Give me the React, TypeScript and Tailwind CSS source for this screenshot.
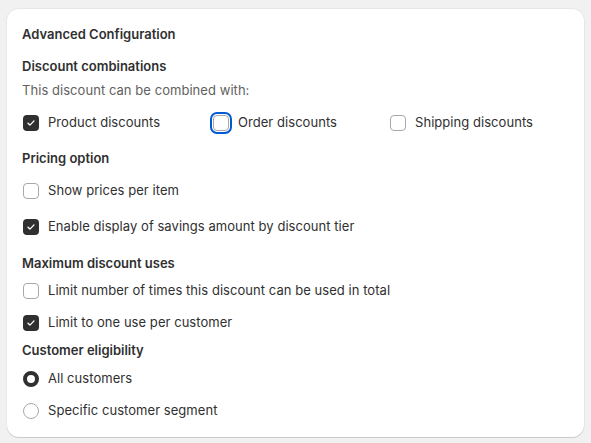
import { useState } from "react";

type CheckProps = {
  checked: boolean;
  focused?: boolean;
  label: string;
  onToggle: () => void;
};

const Checkbox = ({ checked, focused, label, onToggle }: CheckProps) => (
  <label className="flex h-5 cursor-pointer items-center gap-[9px]" onClick={onToggle}>
    <span
      className={`flex h-4 w-4 shrink-0 items-center justify-center rounded-[4px] ${
        checked ? "bg-[#303030]" : "border border-[#a8a8a8] bg-white"
      } ${focused ? "outline-2 outline-offset-[1px] outline-[#005bd3]" : ""}`}
    >
      {checked && (
        <svg viewBox="0 0 16 16" className="h-3 w-3" fill="none">
          <path
            d="M4 8.4l2.6 2.4L12 5.2"
            stroke="white"
            strokeWidth="1.8"
            strokeLinecap="round"
            strokeLinejoin="round"
          />
        </svg>
      )}
    </span>
    <span className="text-[13px] tracking-[0.05px] text-[#303030]">{label}</span>
  </label>
);

const Radio = ({ checked, label, onSelect }: { checked: boolean; label: string; onSelect: () => void }) => (
  <label className="flex h-5 cursor-pointer items-center gap-[9px]" onClick={onSelect}>
    <span
      className={`h-4 w-4 shrink-0 rounded-full bg-white ${
        checked ? "border-[4.5px] border-[#303030]" : "border border-[#a8a8a8]"
      }`}
    />
    <span className="text-[13px] tracking-[0.05px] text-[#303030]">{label}</span>
  </label>
);

const Heading = ({ children, className = "" }: { children: string; className?: string }) => (
  <div className={`h-5 text-[13px] leading-5 font-semibold text-[#303030] ${className}`}>{children}</div>
);

export default function App() {
  const [opts, setOpts] = useState({
    product: true,
    order: false,
    shipping: false,
    perItem: false,
    savings: true,
    limitTotal: false,
    oncePerCustomer: true,
  });
  const [eligibility, setEligibility] = useState<"all" | "segment">("all");
  const toggle = (k: keyof typeof opts) => setOpts((o) => ({ ...o, [k]: !o[k] }));

  return (
    <div
      className="min-h-[443px] bg-[#f1f1f1] px-[7px] pt-[9px] pb-[5px]"
      style={{ fontFamily: "Inter, 'Noto Sans', sans-serif" }}
    >
      <div className="rounded-xl bg-white px-[15px] pt-[15px] pb-[16px] shadow-[0_1px_0_0_rgba(0,0,0,0.12),0_0_0_1px_rgba(0,0,0,0.04)]">
        <Heading>Advanced Configuration</Heading>

        <Heading className="mt-3">Discount combinations</Heading>
        <div className="mt-1 h-5 text-[13px] leading-5 tracking-[0.05px] text-[#616161]">
          This discount can be combined with:
        </div>
        <div className="mt-[13px] grid grid-cols-[190px_177px_1fr] pl-[1px]">
          <Checkbox checked={opts.product} label="Product discounts" onToggle={() => toggle("product")} />
          <Checkbox checked={opts.order} focused label="Order discounts" onToggle={() => toggle("order")} />
          <Checkbox checked={opts.shipping} label="Shipping discounts" onToggle={() => toggle("shipping")} />
        </div>

        <Heading className="mt-[15px]">Pricing option</Heading>
        <div className="mt-[13px] pl-[1px]">
          <Checkbox checked={opts.perItem} label="Show prices per item" onToggle={() => toggle("perItem")} />
        </div>
        <div className="mt-4 pl-[1px]">
          <Checkbox
            checked={opts.savings}
            label="Enable display of savings amount by discount tier"
            onToggle={() => toggle("savings")}
          />
        </div>

        <Heading className="mt-4">Maximum discount uses</Heading>
        <div className="mt-2 pl-[1px]">
          <Checkbox
            checked={opts.limitTotal}
            label="Limit number of times this discount can be used in total"
            onToggle={() => toggle("limitTotal")}
          />
        </div>
        <div className="mt-3 pl-[1px]">
          <Checkbox
            checked={opts.oncePerCustomer}
            label="Limit to one use per customer"
            onToggle={() => toggle("oncePerCustomer")}
          />
        </div>

        <Heading className="mt-[7px]">Customer eligibility</Heading>
        <div className="mt-[9px] pl-[1px]">
          <Radio checked={eligibility === "all"} label="All customers" onSelect={() => setEligibility("all")} />
        </div>
        <div className="mt-3 pl-[1px]">
          <Radio
            checked={eligibility === "segment"}
            label="Specific customer segment"
            onSelect={() => setEligibility("segment")}
          />
        </div>
      </div>
    </div>
  );
}
